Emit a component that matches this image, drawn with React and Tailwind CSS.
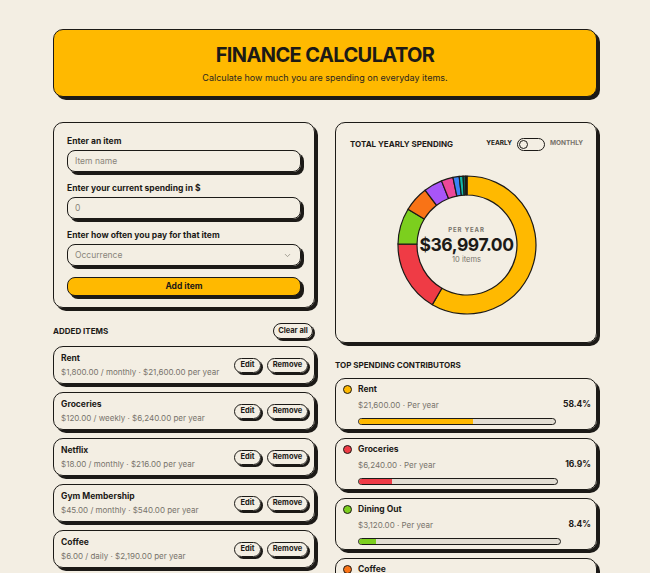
import { ChevronDown } from 'lucide-react';

// Items the user has added, in the order they were entered
const ITEMS = [
  { name: 'Rent', amount: 1800, freq: 'monthly' },
  { name: 'Groceries', amount: 120, freq: 'weekly' },
  { name: 'Netflix', amount: 18, freq: 'monthly' },
  { name: 'Gym Membership', amount: 45, freq: 'monthly' },
  { name: 'Coffee', amount: 6, freq: 'daily' },
  { name: 'Dining Out', amount: 60, freq: 'weekly' },
  { name: 'Car Insurance', amount: 135, freq: 'monthly' },
  { name: 'Electricity', amount: 85, freq: 'monthly' },
  { name: 'Gifts', amount: 331, freq: 'yearly' },
  { name: 'Cloud Storage', amount: 10, freq: 'monthly' },
];

const PER_YEAR = { daily: 365, weekly: 52, monthly: 12, yearly: 1 };

const COLORS = ['#ffb900', '#ef3b45', '#7ccf1e', '#f97316', '#a855f7', '#ec4899', '#3b82f6', '#14b8a6', '#0f5f55', '#1c1a17'];

const money = n => '$' + n.toLocaleString('en-US', { minimumFractionDigits: 2, maximumFractionDigits: 2 });

const yearly = ITEMS.map(i => ({ ...i, year: i.amount * PER_YEAR[i.freq] }));
const total = yearly.reduce((s, i) => s + i.year, 0);
const sorted = [...yearly].sort((a, b) => b.year - a.year).map((i, idx) => ({ ...i, color: COLORS[idx] }));

function arc(cx, cy, R, r, a0, a1) {
  const p = (rad, a) => [cx + rad * Math.sin(a), cy - rad * Math.cos(a)];
  const large = a1 - a0 > Math.PI ? 1 : 0;
  const [x0, y0] = p(R, a0);
  const [x1, y1] = p(R, a1);
  const [x2, y2] = p(r, a1);
  const [x3, y3] = p(r, a0);
  return `M${x0} ${y0} A${R} ${R} 0 ${large} 1 ${x1} ${y1} L${x2} ${y2} A${r} ${r} 0 ${large} 0 ${x3} ${y3} Z`;
}

function Donut() {
  let start = 0;
  const segs = sorted.map(s => {
    const sweep = (s.year / total) * Math.PI * 2;
    const d = arc(71, 71, 69, 50, start, start + sweep);
    start += sweep;
    return <path key={s.name} d={d} fill={s.color} stroke="#1c1a17" strokeWidth="1.2" strokeLinejoin="round" />;
  });
  return (
    <div className="relative w-[142px] h-[142px]">
      <svg width="142" height="142" viewBox="0 0 142 142">{segs}</svg>
      <div className="absolute inset-0 flex flex-col items-center justify-center">
        <div className="text-[6px] leading-[9px] font-bold tracking-[0.15em] text-[#77736b]">PER YEAR</div>
        <div className="text-[17.5px] font-bold tracking-tight leading-[21px] text-[#1c1a17]">{money(total)}</div>
        <div className="text-[7.5px] leading-[10px] text-[#77736b]">{ITEMS.length} items</div>
      </div>
    </div>
  );
}

function Field({ label, children, first }) {
  return (
    <div className={first ? '' : 'mt-[10px]'}>
      <div className="text-[8.5px] leading-[12px] font-bold">{label}</div>
      <div className="mt-[3px]">{children}</div>
    </div>
  );
}

const box = 'border-[1.5px] border-[#1c1a17] shadow-[3px_3px_0_#1c1a17]';
const pill = 'border-[1.5px] border-[#1c1a17] shadow-[2px_2px_0_#1c1a17] rounded-full font-bold leading-none';

export default function App() {
  return (
    <div className="min-h-screen bg-[#f3eee3] font-[Inter,sans-serif] text-[#1c1a17] pt-[29px] pb-10">
      <div className="w-[544px] mx-auto">
        <div className={`${box} rounded-[10px] bg-[#ffb900] flex flex-col items-center pt-[13px] pb-[12px]`}>
          <h1 className="text-[20px] leading-[25px] font-bold tracking-[-0.03em]">FINANCE CALCULATOR</h1>
          <p className="mt-[3px] text-[9px] leading-[13px] text-[#2a2620]">Calculate how much you are spending on everyday items.</p>
        </div>

        <div className="grid grid-cols-2 gap-5 mt-[25px] items-start">
          {/* left column */}
          <div>
            <div className={`${box} rounded-[10px] px-[13px] pt-[12px] pb-[11px]`}>
              <Field label="Enter an item" first>
                <div className={`${box} rounded-[8px] h-[22px] flex items-center px-[7px] text-[8.5px] text-[#8a857b]`}>Item name</div>
              </Field>
              <Field label="Enter your current spending in $">
                <div className={`${box} rounded-[8px] h-[22px] flex items-center px-[7px] text-[8.5px] text-[#8a857b]`}>0</div>
              </Field>
              <Field label="Enter how often you pay for that item">
                <div className={`${box} rounded-[8px] h-[22px] flex items-center justify-between px-[7px] text-[8.5px] text-[#8a857b]`}>
                  <span>Occurrence</span>
                  <ChevronDown size={9} strokeWidth={2} className="text-[#8a857b] mr-[1px]" />
                </div>
              </Field>
              <button className={`${box} mt-[11px] w-full h-[19px] rounded-[8px] bg-[#ffb900] text-[8.5px] font-bold`}>Add item</button>
            </div>

            <div className="mt-[14px] flex items-center justify-between h-[17px]">
              <span className="text-[8px] font-bold">ADDED ITEMS</span>
              <button className={`${pill} h-[16px] w-[40px] text-[7.5px] mr-[2px]`}>Clear all</button>
            </div>

            <div className="mt-[7px] flex flex-col gap-2">
              {yearly.map(i => (
                <div key={i.name} className={`${box} rounded-[10px] h-[38px] flex items-center justify-between pl-[7px] pr-[6px]`}>
                  <div>
                    <div className="text-[8.5px] leading-[12px] font-bold">{i.name}</div>
                    <div className="mt-[2px] text-[8px] leading-[12px] text-[#77736b]">
                      {money(i.amount)} / {i.freq} · {money(i.year)} per year
                    </div>
                  </div>
                  <div className="flex items-center gap-[6px]">
                    <button className={`${pill} h-[15px] w-[27px] text-[7.5px]`}>Edit</button>
                    <button className={`${pill} h-[15px] w-[41px] text-[7.5px]`}>Remove</button>
                  </div>
                </div>
              ))}
            </div>
          </div>

          {/* right column */}
          <div>
            <div className={`${box} rounded-[10px] h-[221px] pl-[14px] pr-[13px] pt-[14px] flex flex-col`}>
              <div className="flex items-center justify-between h-[14px]">
                <span className="text-[8px] font-bold">TOTAL YEARLY SPENDING</span>
                <div className="flex items-center gap-[5px] text-[6.5px] font-bold">
                  <span>YEARLY</span>
                  <div className="w-[28px] h-[13px] rounded-full border-[1.5px] border-[#1c1a17] flex items-center px-[1px]">
                    <div className="w-[9px] h-[9px] rounded-full border-[1.5px] border-[#1c1a17]" />
                  </div>
                  <span className="text-[#77736b]">MONTHLY</span>
                </div>
              </div>
              <div className="flex-1 flex items-center justify-center pb-[4px]">
                <Donut />
              </div>
            </div>

            <div className="mt-[16px] text-[8px] leading-[12px] font-bold">TOP SPENDING CONTRIBUTORS</div>

            <div className="mt-[7px] flex flex-col gap-2">
              {sorted.slice(0, 5).map(s => {
                const pct = (s.year / total) * 100;
                return (
                  <div key={s.name} className={`${box} rounded-[10px] h-[52px] flex items-center gap-[7px] pl-[7px] pr-[5px]`}>
                    <div className="flex-1">
                      <div className="flex items-center gap-[6px] h-[12px]">
                        <span className="w-[9px] h-[9px] rounded-full border-[1.5px] border-[#1c1a17]" style={{ background: s.color }} />
                        <span className="text-[8.5px] font-bold">{s.name}</span>
                      </div>
                      <div className="ml-[15px] mt-[3px] text-[8px] leading-[12px] text-[#77736b]">
                        {money(s.year)} · Per year
                      </div>
                      <div className="ml-[15px] mt-[7px] h-[7px] rounded-full border-[1.5px] border-[#1c1a17] bg-[#e2ddd2] overflow-hidden">
                        <div className="h-full" style={{ width: pct + '%', background: s.color }} />
                      </div>
                    </div>
                    <span className="text-[8.5px] font-bold">{pct.toFixed(1)}%</span>
                  </div>
                );
              })}
            </div>
          </div>
        </div>
      </div>
    </div>
  );
}
